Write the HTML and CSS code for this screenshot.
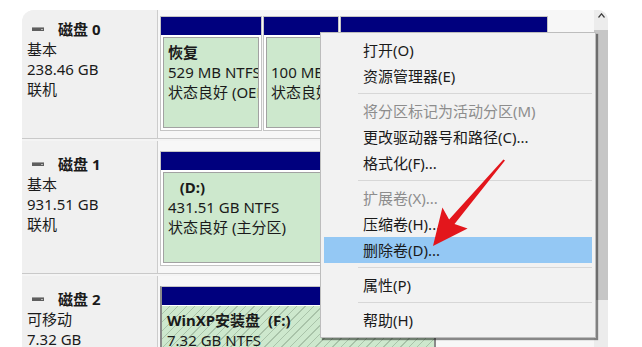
FILE: index.html
```html
<!DOCTYPE html>
<html lang="zh-CN">
<head>
  <meta charset="UTF-8">
  <title>磁盘管理</title>
  <link rel="stylesheet" href="styles.css">
</head>
<body>

  <!-- Disk map -->
  <div class="panel">
    <div class="disks">

      <!-- 磁盘 0 -->
      <div class="disk">
        <div class="disk-info">
          <div class="disk-name">
            <svg class="disk-icon" width="12" height="6" viewBox="0 0 12 6"><rect x="0" y="1" width="12" height="4" fill="#5e5e5e"/><rect x="0" y="1" width="12" height="1" fill="#9c9c9c"/><rect x="9" y="3" width="2" height="1" fill="#b8b8b8"/></svg>磁盘 0
          </div>
          <div>基本</div>
          <div>238.46 GB</div>
          <div>联机</div>
        </div>
        <div class="parts">
          <div class="part w-recovery">
            <div class="part-bar"></div>
            <div class="part-body">
              <div class="part-fill">
                <div class="part-name">恢复</div>
                <div>529 MB NTFS</div>
                <div>状态良好 (OEM 分区)</div>
              </div>
            </div>
          </div>
          <div class="part w-efi">
            <div class="part-bar"></div>
            <div class="part-body">
              <div class="part-fill">
                <div class="part-name">&nbsp;</div>
                <div>100 MB</div>
                <div>状态良好</div>
              </div>
            </div>
          </div>
          <div class="part w-system">
            <div class="part-bar"></div>
            <div class="part-body">
              <div class="part-fill"></div>
            </div>
          </div>
        </div>
      </div>

      <!-- 磁盘 1 -->
      <div class="disk">
        <div class="disk-info">
          <div class="disk-name">
            <svg class="disk-icon" width="12" height="6" viewBox="0 0 12 6"><rect x="0" y="1" width="12" height="4" fill="#5e5e5e"/><rect x="0" y="1" width="12" height="1" fill="#9c9c9c"/><rect x="9" y="3" width="2" height="1" fill="#b8b8b8"/></svg>磁盘 1
          </div>
          <div>基本</div>
          <div>931.51 GB</div>
          <div>联机</div>
        </div>
        <div class="parts">
          <div class="part w-data">
            <div class="part-bar"></div>
            <div class="part-body">
              <div class="part-fill">
                <div class="part-name">&nbsp;&nbsp;&nbsp;(D:)</div>
                <div>431.51 GB NTFS</div>
                <div>状态良好 (主分区)</div>
              </div>
            </div>
          </div>
        </div>
      </div>

      <!-- 磁盘 2 -->
      <div class="disk">
        <div class="disk-info">
          <div class="disk-name">
            <svg class="disk-icon" width="12" height="6" viewBox="0 0 12 6"><rect x="0" y="1" width="12" height="4" fill="#5e5e5e"/><rect x="0" y="1" width="12" height="1" fill="#9c9c9c"/><rect x="9" y="3" width="2" height="1" fill="#b8b8b8"/></svg>磁盘 2
          </div>
          <div>可移动</div>
          <div>7.32 GB</div>
        </div>
        <div class="parts">
          <div class="part w-usb selected">
            <div class="part-bar"></div>
            <div class="part-body">
              <div class="part-fill">
                <div class="part-name">WinXP安装盘&nbsp;&nbsp;(F:)</div>
                <div>7.32 GB NTFS</div>
              </div>
            </div>
          </div>
        </div>
      </div>

    </div>

    <div class="scrollbar">
      <svg class="scroll-up" width="7" height="5" viewBox="0 0 7 5"><path d="M0.5 4.5 L3.5 0.8 L6.5 4.5" fill="none" stroke="#404040" stroke-width="1.2"/></svg>
      <div class="scroll-thumb"></div>
    </div>
  </div>

  <!-- Context menu -->
  <div class="menu">
    <div class="item">打开(O)</div>
    <div class="item">资源管理器(E)</div>
    <div class="sep"></div>
    <div class="item disabled">将分区标记为活动分区(M)</div>
    <div class="item">更改驱动器号和路径(C)...</div>
    <div class="item">格式化(F)...</div>
    <div class="sep"></div>
    <div class="item disabled">扩展卷(X)...</div>
    <div class="item">压缩卷(H)...</div>
    <div class="item active">删除卷(D)...</div>
    <div class="sep"></div>
    <div class="item">属性(P)</div>
    <div class="sep"></div>
    <div class="item">帮助(H)</div>
  </div>

  <!-- Red pointer arrow -->
  <svg class="pointer" width="642" height="347" viewBox="0 0 642 347">
    <polygon points="505,160.5 454.5,224 467.6,228.5 433,246 442.4,207.5 449.1,219.6 503.4,159.5" fill="#e3161c"/>
  </svg>

</body>
</html>
```

FILE: styles.css
```css
body {
  margin: 0;
  background: #fff;
  font-family: "Noto Sans", "Noto Sans CJK SC", sans-serif;
  font-size: 15px;
  color: #1a1a1a;
  position: relative;
  height: 347px;
  overflow: hidden;
}

.panel {
  margin: 10px 0 0 22px;
  width: 586px;
  height: 337px;
  border-radius: 12px 10px 0 0;
  overflow: hidden;
  display: flex;
  background: #f4f4f4;
}

.disks {
  flex: 1;
  margin-top: -4px;
}

/* One disk row */
.disk {
  display: flex;
  height: 132px;
  border-bottom: 1px solid #c9c9c9;
  margin-bottom: 2px;
}

.disk-info {
  width: 136px;
  box-sizing: border-box;
  background: #f0f0f0;
  border-right: 1px solid #cccccc;
  padding: 13px 0 0 5px;
  line-height: 20px;
}

.disk-name {
  font-weight: bold;
}

.disk-icon {
  margin: 0 14px 0 5px;
  vertical-align: 3px;
}

.parts {
  flex: 1;
  display: flex;
  gap: 1px;
  padding: 10px 0 0 2px;
  background: #f7f7f7;
}

/* Partition boxes */
.part {
  height: 115px;
  box-sizing: border-box;
  border: 1px solid #c4c4c4;
  background: #fff;
  display: flex;
  flex-direction: column;
}

.w-recovery { width: 102px; }
.w-efi { width: 76px; }
.w-system { width: 208px; }
.w-data { width: 400px; }
.w-usb { width: 276px; height: 140px; }

.part-bar {
  height: 18px;
  background: #00007e;
}

.part-body {
  flex: 1;
  padding: 2px;
  min-height: 0;
}

.part-fill {
  height: 100%;
  box-sizing: border-box;
  background: #cde8cd;
  border: 1px solid #a2a2a2;
  padding: 4px 0 0 4px;
  line-height: 20px;
  white-space: nowrap;
  overflow: hidden;
}

.part-name {
  font-weight: bold;
}

.part.selected {
  border-left: 2px solid #8a8a8a;
  border-right: 2px solid #8a8a8a;
}

.part.selected .part-body {
  padding: 1px 0 0 0;
}

.part.selected .part-fill {
  border: none;
  padding-left: 5px;
  background: repeating-linear-gradient(135deg, #cde8cd 0px, #cde8cd 5px, #a9c3a9 5px, #a9c3a9 6px);
}

/* Scrollbar on the right */
.scrollbar {
  width: 14px;
  background: #ececec;
  display: flex;
  flex-direction: column;
  align-items: center;
}

.scroll-up {
  margin-top: 3px;
}

.scroll-thumb {
  margin-top: 12px;
  width: 14px;
  height: 270px;
  background: #c6c6c6;
}

/* Context menu */
.menu {
  position: absolute;
  left: 320px;
  top: 32px;
  width: 276px;
  box-sizing: border-box;
  border: 1px solid #bdbdbd;
  background: #f2f2f2;
  padding: 4px 3px;
  box-shadow: 2px 2px 1px rgba(0, 0, 0, 0.45);
}

.item {
  height: 26px;
  line-height: 26px;
  padding-left: 39px;
  white-space: nowrap;
}

.item.disabled {
  color: #8d8d8d;
}

.item.active {
  background: #94c8f4;
}

.sep {
  height: 1px;
  background: #d7d7d7;
  margin: 4px 0 4px 34px;
}

.pointer {
  position: absolute;
  left: 0;
  top: 0;
  pointer-events: none;
}
```
